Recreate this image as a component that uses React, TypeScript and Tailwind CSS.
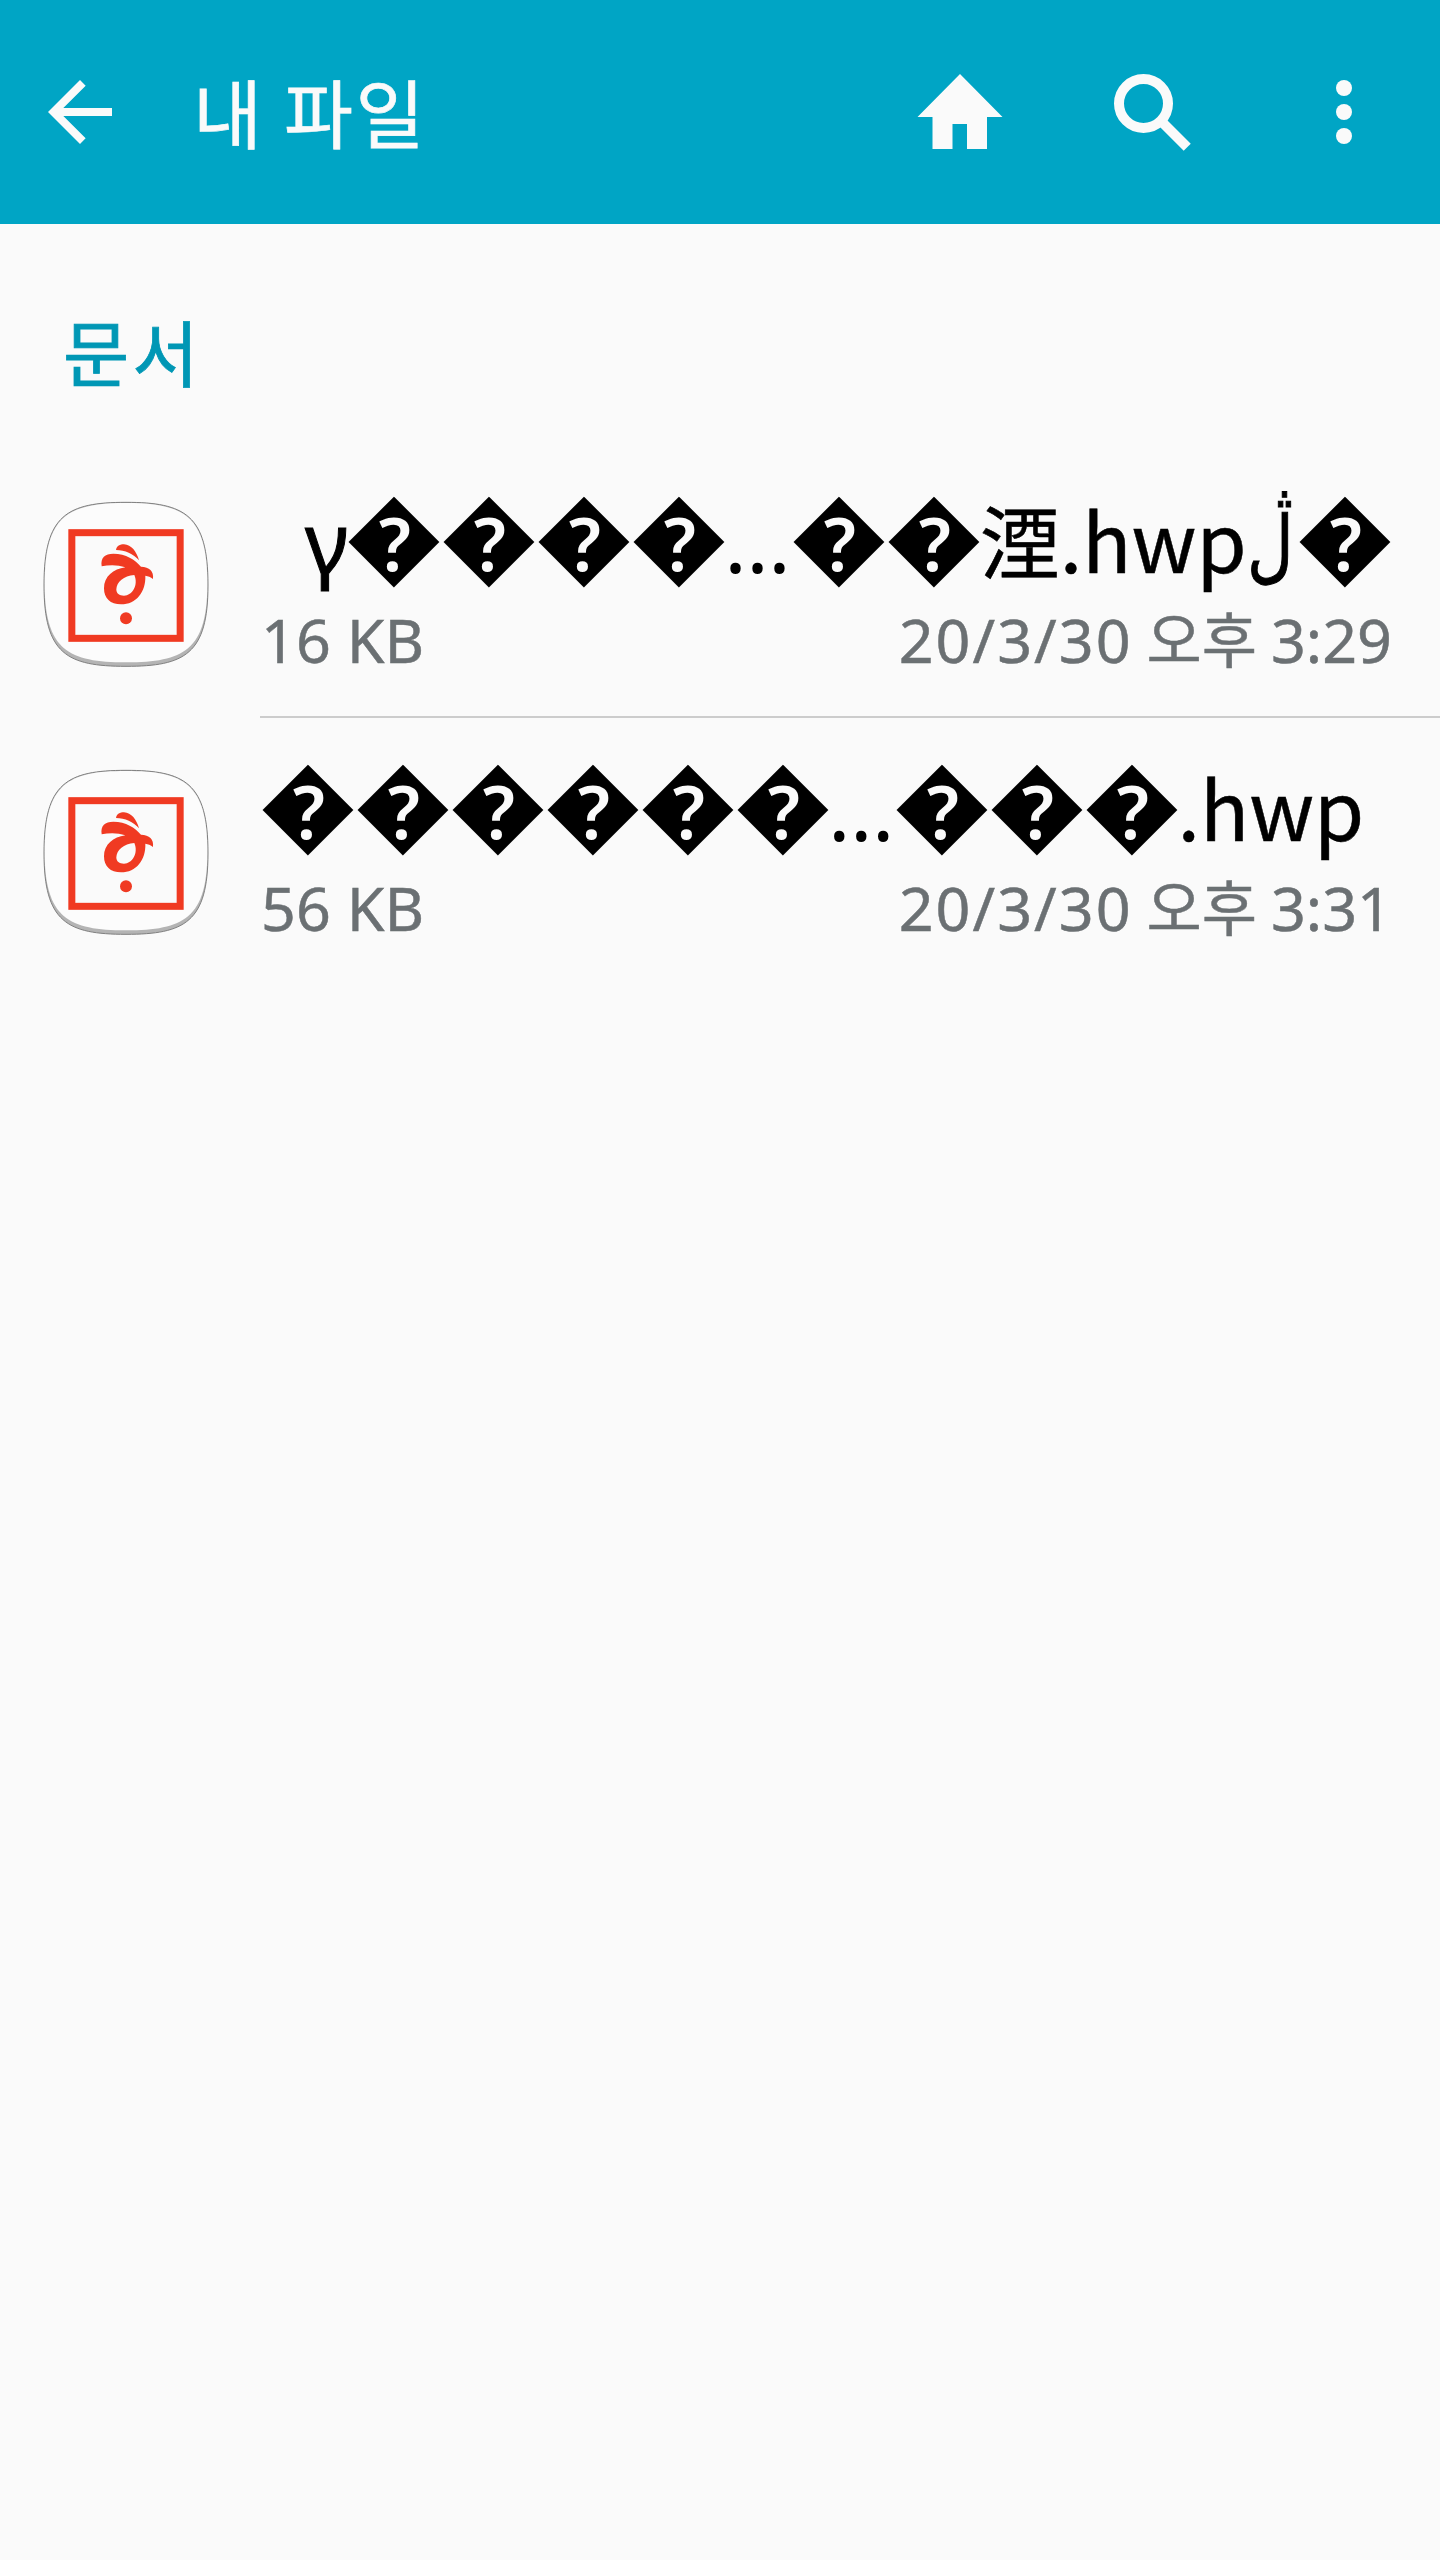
import React from 'react'

const BAD = '\uFFFD'

const files = [
  { id: 1, size: '16 KB', date: '20/3/30', time: '3:29' },
  { id: 2, size: '56 KB', date: '20/3/30', time: '3:31' },
]

const BackIcon = () => (
  <svg width="96" height="96" viewBox="0 0 24 24" fill="#fafafa">
    <path d="M20 11H7.83l5.59-5.59L12 4l-8 8 8 8 1.41-1.41L7.83 13H20v-2z" />
  </svg>
)

const HomeIcon = () => (
  <svg width="96" height="96" viewBox="0 0 96 96" fill="#fafafa">
    <path d="M48 10L90.5 53H75v32H55V60H40.5v25H20.5V53H5.5z" />
  </svg>
)

const SearchIcon = () => (
  <svg width="96" height="96" viewBox="0 0 96 96" fill="none" stroke="#fafafa" strokeWidth="10">
    <circle cx="39.5" cy="39.5" r="24.5" />
    <path d="M57 57L83.2 83.2" />
  </svg>
)

const MoreIcon = () => (
  <svg width="96" height="96" viewBox="0 0 96 96" fill="#fafafa">
    <circle cx="48" cy="24" r="8" />
    <circle cx="48" cy="48" r="8" />
    <circle cx="48" cy="72" r="8" />
  </svg>
)

const HwpIcon = () => (
  <svg className="shrink-0" width="168" height="168" viewBox="66 60 504 504">
    <path
      fill="#b4b4b4"
      stroke="#808080"
      strokeWidth="3"
      d="M318 67C495 67 564 105 564 315C564 522 495 559 318 559C141 559 72 522 72 315C72 105 141 67 318 67z"
    />
    <path
      fill="#fcfcfc"
      d="M318 69C493 69 562 107 562 312C562 510 491 547 318 547C145 547 74 510 74 312C74 107 143 69 318 69z"
    />
    <rect x="155.500" y="158" width="325" height="317" fill="#fafafa" stroke="#f03a22" strokeWidth="21" />
    <g fill="#f03a22">
      <path d="M288 210C290 198 300 193 312 193C334 194 350 215 357 241C340 222 315 210 288 210z" />
      <path
        fillRule="evenodd"
        d="M245 259C241 232 255 221 280 221C318 221 345 239 363 260C388 261 402 273 399 297C392 291 384 288 376 287C378 335 349 373 303 373C271 373 252 356 252 325C252 289 280 267 316 262C294 254 268 254 245 259zM343 285C311 287 290 306 289 328C289 341 298 347 312 347C337 347 356 315 343 285z"
      />
      <circle cx="318" cy="415" r="18" />
    </g>
  </svg>
)

const Bad = ({ count }: { count: number }) => (
  <span className="translate-x-[2px] -translate-y-[2px] font-['Noto_Sans_CJK_KR',sans-serif] text-[96px] tracking-[-1px] [-webkit-text-stroke:2px]">
    {BAD.repeat(count)}
  </span>
)

const Dots = () => (
  <span className="-ml-[2px] translate-x-[2px] font-['Noto_Sans',sans-serif] text-[84px]">…</span>
)

const Ext = () => (
  <span className="font-['Noto_Sans_CJK_KR',sans-serif] text-[81px] [-webkit-text-stroke:0.5px]">.hwp</span>
)

const FirstName = () => (
  <div className="ml-[45px] flex items-baseline leading-none text-black">
    <span className="-mr-[4px] font-['Noto_Sans',sans-serif] text-[84px] [-webkit-text-stroke:1px]">γ</span>
    <Bad count={4} />
    <Dots />
    <Bad count={2} />
    <span className="ml-px font-['Noto_Sans_CJK_KR',sans-serif] text-[80px] [-webkit-text-stroke:0.5px]">湮</span>
    <Ext />
    <span className="-mr-[10px] origin-left scale-x-80 font-['Noto_Sans',sans-serif] text-[80px] [-webkit-text-stroke:1px]">
      ڷ
    </span>
    <Bad count={1} />
  </div>
)

const SecondName = () => (
  <div className="-ml-[2px] flex items-baseline leading-none text-black">
    <Bad count={6} />
    <Dots />
    <Bad count={3} />
    <Ext />
  </div>
)

const App = () => {
  return (
    <div className="min-h-[2560px] w-[1440px] overflow-hidden bg-[#fafafa] font-['Noto_Sans','Noto_Sans_CJK_KR',sans-serif]">
      {/* Action bar */}
      <header className="flex h-[224px] items-center bg-[#00a5c5] pl-8 pr-12">
        <BackIcon />
        <h1 className="ml-[65px] -mt-1 font-['Noto_Sans_CJK_KR',sans-serif] text-[75px] leading-none tracking-[2.6px] text-[#fafafa] [-webkit-text-stroke:0.7px]">
          내 파일
        </h1>
        <div className="ml-auto flex items-center gap-24">
          <HomeIcon />
          <SearchIcon />
          <MoreIcon />
        </div>
      </header>

      {/* Section title */}
      <h2 className="h-[226px] pl-[63px] pt-[90px] font-['Noto_Sans_CJK_KR',sans-serif] text-[72px] leading-none tracking-[3px] text-[#0097b5] [-webkit-text-stroke:0.8px]">
        문서
      </h2>

      {/* File list */}
      <ul>
        {files.map((file, i) => (
          <li key={file.id} className="flex h-[268px] pl-[42px]">
            <div className="w-[218px] shrink-0 pt-[50px]">
              <HwpIcon />
            </div>
            <div className={`flex-1 whitespace-nowrap pt-[34px] ${i === 0 ? 'border-b-2 border-[#cccccc]' : ''}`}>
              <div className="h-[123px]">{i === 0 ? <FirstName /> : <SecondName />}</div>
              <div className="flex items-baseline justify-between pl-px pr-[48px] text-[61px] leading-none text-[#6b7073] [-webkit-text-stroke:0.5px]">
                <span>{file.size}</span>
                <span className="flex items-baseline">
                  <span className="tracking-[2px]">{file.date}</span>
                  <span className="mx-[14px] font-['Noto_Sans_CJK_KR',sans-serif] text-[60px]">오후</span>
                  <span>{file.time}</span>
                </span>
              </div>
            </div>
          </li>
        ))}
      </ul>
    </div>
  )
}

export default App
